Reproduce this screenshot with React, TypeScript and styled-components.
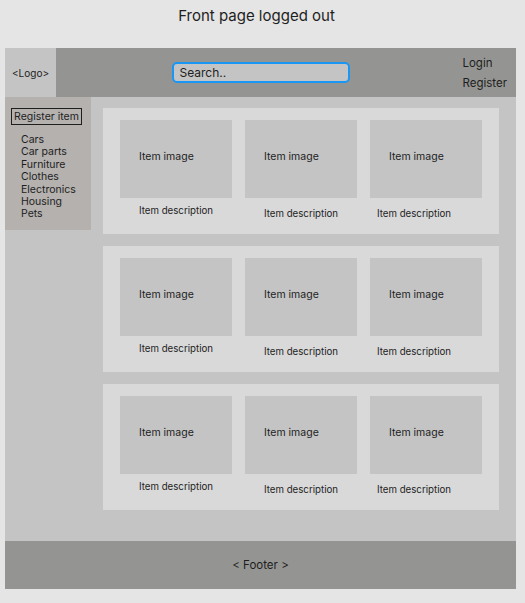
import React from "react";
import styled, { createGlobalStyle } from "styled-components";

const Global = createGlobalStyle`
  html, body { margin: 0; padding: 0; background: #e5e5e5; }
  body { font-family: Inter, "Noto Sans", sans-serif; color: #1e1e1e; }
`;

const Page = styled.div`
  width: 525px;
  height: 603px;
  background: #e5e5e5;
  display: flex;
  flex-direction: column;
`;

const Title = styled.h1`
  margin: 0;
  height: 48px;
  padding: 6px 12px 0 0;
  box-sizing: border-box;
  font-size: 15px;
  font-weight: 400;
  line-height: 20px;
  text-align: center;
`;

const Frame = styled.div`
  margin-left: 5px;
  width: 511px;
  display: flex;
  flex-direction: column;
`;

const Header = styled.header`
  height: 49px;
  background: #949592;
  display: grid;
  grid-template-columns: 1fr auto 1fr;
  align-items: stretch;
`;

const LogoBox = styled.div`
  width: 51px;
  background: #c4c4c4;
  display: flex;
  align-items: center;
  justify-content: center;
  font-size: 10px;
  justify-self: start;
  padding-top: 1px;
`;

const Search = styled.div`
  align-self: center;
  width: 178px;
  height: 21px;
  box-sizing: border-box;
  border: 2px solid #1a97f5;
  border-radius: 5px;
  background: #c4c4c4;
  font-size: 12px;
  line-height: 17px;
  padding-left: 6px;
  margin-top: -1px;
`;

const Nav = styled.nav`
  justify-self: end;
  padding-right: 9px;
  padding-top: 5px;
  display: flex;
  flex-direction: column;
  align-items: flex-start;
  font-size: 11.5px;
  line-height: 20px;
`;

const Body = styled.div`
  height: 444px;
  background: #c4c4c4;
  display: grid;
  grid-template-columns: 86px 1fr;
  align-items: start;
`;

const Sidebar = styled.aside`
  height: 133px;
  background: #b4b1af;
  box-sizing: border-box;
  padding: 11px 0 0 6px;
`;

const RegisterButton = styled.div`
  width: 71px;
  height: 17px;
  box-sizing: border-box;
  border: 1px solid #1e1e1e;
  font-size: 10.5px;
  line-height: 15px;
  text-align: center;
`;

const CategoryList = styled.ul`
  list-style: none;
  margin: 9px 0 0 10px;
  padding: 0;
  font-size: 10.5px;
  line-height: 12.4px;
`;

const Content = styled.main`
  padding: 11px 17px 0 12px;
  display: flex;
  flex-direction: column;
  gap: 12px;
`;

const Panel = styled.section`
  height: 126px;
  background: #d9d9d9;
  box-sizing: border-box;
  padding: 12px 17px 0 17px;
  display: grid;
  grid-template-columns: repeat(3, 112px);
  column-gap: 13px;
`;

const Card = styled.div`
  display: flex;
  flex-direction: column;
`;

const ItemImage = styled.div`
  height: 78px;
  background: #c4c4c4;
  font-size: 10.5px;
  line-height: 14px;
  padding: 30px 0 0 19px;
  box-sizing: border-box;
`;

const Description = styled.div<{ $left: number; $top: number }>`
  font-size: 9.7px;
  line-height: 12px;
  margin-left: ${(p) => p.$left}px;
  margin-top: ${(p) => p.$top}px;
  white-space: nowrap;
`;

const Footer = styled.footer`
  height: 48px;
  background: #949592;
  display: flex;
  align-items: center;
  justify-content: center;
  font-size: 11.5px;
`;

const categories = ["Cars", "Car parts", "Furniture", "Clothes", "Electronics", "Housing", "Pets"];

const cards = [
  { left: 19, top: 7 },
  { left: 19, top: 10 },
  { left: 7, top: 10 },
];

export default function App() {
  return (
    <>
      <Global />
      <Page>
        <Title>Front page logged out</Title>
        <Frame>
          <Header>
            <LogoBox>&lt;Logo&gt;</LogoBox>
            <Search>Search..</Search>
            <Nav>
              <span>Login</span>
              <span>Register</span>
            </Nav>
          </Header>
          <Body>
            <Sidebar>
              <RegisterButton>Register item</RegisterButton>
              <CategoryList>
                {categories.map((c) => (
                  <li key={c}>{c}</li>
                ))}
              </CategoryList>
            </Sidebar>
            <Content>
              {[0, 1, 2].map((row) => (
                <Panel key={row}>
                  {cards.map((c, i) => (
                    <Card key={i}>
                      <ItemImage>Item image</ItemImage>
                      <Description $left={c.left} $top={c.top}>
                        Item description
                      </Description>
                    </Card>
                  ))}
                </Panel>
              ))}
            </Content>
          </Body>
          <Footer>&lt; Footer &gt;</Footer>
        </Frame>
      </Page>
    </>
  );
}
